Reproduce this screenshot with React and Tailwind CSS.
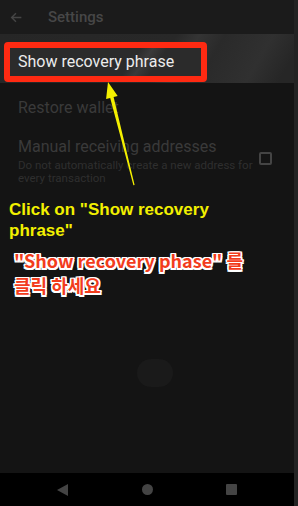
import React from 'react';

const outline =
    '[text-shadow:1.5px_1.5px_0_#fff,-1.5px_-1.5px_0_#fff,1.5px_-1.5px_0_#fff,-1.5px_1.5px_0_#fff,0_1.5px_0_#fff,0_-1.5px_0_#fff,1.5px_0_0_#fff,-1.5px_0_0_#fff]';

export default function App() {
    return (
        <div className="relative w-[298px] h-[506px] flex bg-[#232323] overflow-hidden font-['Roboto',sans-serif]">
            <div className="w-[294px] flex flex-col">
                {/* app bar */}
                <div className="h-[34px] bg-[#1b1b1b] flex items-center shrink-0">
                    <svg className="ml-[10px] w-[13px] h-[13px]" viewBox="0 0 24 24" fill="none" stroke="#454545" strokeWidth="2.6">
                        <path d="M21 12H4M11 4l-8 8 8 8" />
                    </svg>
                    <span className="ml-[25px] text-[15px] font-medium text-[#474747]">Settings</span>
                </div>

                <div className="flex-1 flex flex-col bg-[#141414]">
                    {/* highlighted row */}
                    <div className="h-[49px] shrink-0 flex items-start pt-[8px] px-[4px] bg-[#262626] bg-[linear-gradient(120deg,#262626_0%,#282828_55%,#343434_62%,#2a2a2a_70%,#303030_85%,#262626_95%)]">
                        <div className="w-[203px] h-[40px] border-[6px] border-[#ff2a12] rounded-[4px] flex items-center pl-[8px] bg-[linear-gradient(125deg,#2b2b2b_0%,#2b2b2b_62%,#3a3a3a_68%,#2b2b2b_75%)]">
                            <span className="text-[16px] text-[#ececec] leading-none whitespace-nowrap">Show recovery phrase</span>
                        </div>
                    </div>

                    <div className="h-[48px] shrink-0 flex items-center pl-[18px] pt-[2px]">
                        <span className="text-[16px] text-[#3a3a3a]">Restore wallet</span>
                    </div>

                    <div className="h-[58px] shrink-0 flex items-start pl-[18px] pr-[22px] pt-[6px]">
                        <div className="flex-1">
                            <div className="text-[16px] leading-[20px] text-[#3a3a3a]">Manual receiving addresses</div>
                            <div className="text-[11.5px] leading-[13px] text-[#2f2f2f] mt-[2px]">
                                Do not automatically create a new address for
                                <br />
                                every transaction
                            </div>
                        </div>
                        <div className="w-[13px] h-[13px] mt-[15px] border-2 border-[#444] rounded-[2px]" />
                    </div>

                    {/* annotations */}
                    <div className="pl-[9px] pt-[10px] font-bold">
                        <div className="text-[17px] leading-[21px] text-[#f2f000] font-['Liberation_Sans',sans-serif]">
                            Click on "Show recovery
                            <br />
                            phrase"
                        </div>
                        <div className={`mt-[7px] pl-[5px] text-[18px] leading-[25px] text-[#f23c1c] font-['Noto_Sans_CJK_KR',sans-serif] ${outline}`}>
                            "Show recovery phase" 를
                            <br />
                            클릭 하세요
                        </div>
                    </div>

                    <div className="flex-1 flex items-start justify-center pt-[61px]">
                        <div className="w-[36px] h-[28px] rounded-full bg-[#1a1a1a] ml-[16px]" />
                    </div>
                </div>

                {/* nav bar */}
                <div className="h-[33px] shrink-0 bg-black flex items-center">
                    <div className="w-[294px] flex items-center justify-between px-[57px]">
                        <svg className="w-[11px] h-[12px]" viewBox="0 0 11 12">
                            <path d="M11 0V12L0 6Z" fill="#444" />
                        </svg>
                        <div className="w-[11px] h-[11px] rounded-full bg-[#444]" />
                        <div className="w-[11px] h-[11px] rounded-[1px] bg-[#444]" />
                    </div>
                </div>
            </div>
            <div className="w-[4px] bg-[#232323]" />

            {/* pointer arrow */}
            <svg className="absolute left-0 top-0 pointer-events-none" width="298" height="506" viewBox="0 0 298 506">
                <polygon
                    points="108,82 117.7,96 113.6,97 134.6,185 133.4,185.2 110.2,98 106.1,99"
                    fill="#f4f000"
                />
            </svg>
        </div>
    );
}
